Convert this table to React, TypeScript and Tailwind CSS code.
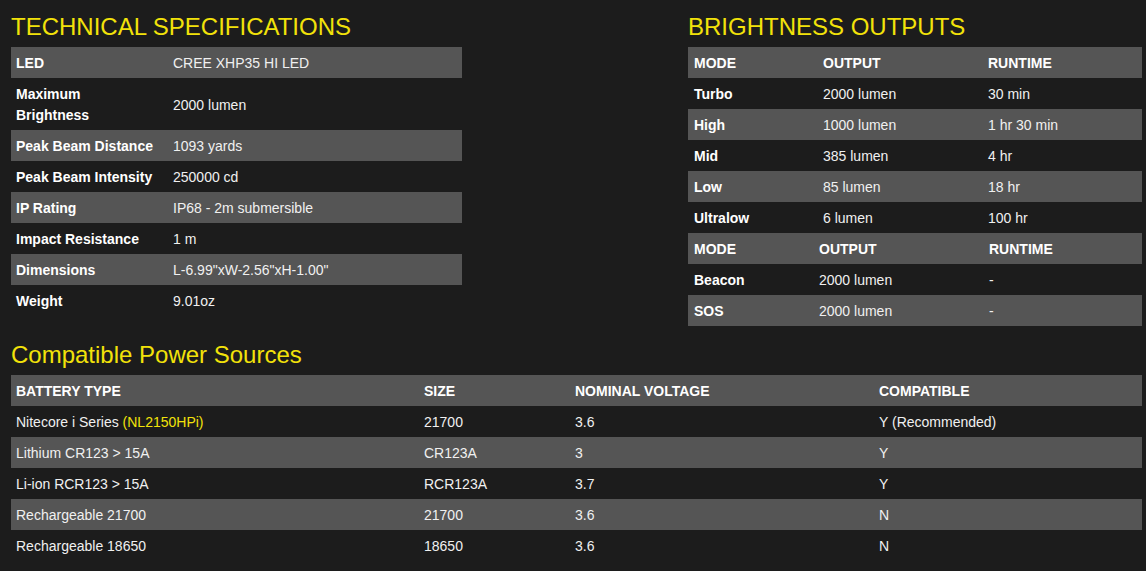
const STRIPE = "bg-[#555555]";
const CELL = "px-[5px] pt-[6px] pb-[4px]";
const MCELL = "px-[6px] pt-[6px] pb-[4px]";

type Cell = string | JSX.Element;

const SPECS: [Cell, Cell][] = [
  ["LED", "CREE XHP35 HI LED"],
  [
    <>
      Maximum
      <br />
      Brightness
    </>,
    "2000 lumen",
  ],
  ["Peak Beam Distance", "1093 yards"],
  ["Peak Beam Intensity", "250000 cd"],
  ["IP Rating", "IP68 - 2m submersible"],
  ["Impact Resistance", "1 m"],
  ["Dimensions", 'L-6.99"xW-2.56"xH-1.00"'],
  ["Weight", "9.01oz"],
];

const MODES: string[][] = [
  ["Turbo", "2000 lumen", "30 min"],
  ["High", "1000 lumen", "1 hr 30 min"],
  ["Mid", "385 lumen", "4 hr"],
  ["Low", "85 lumen", "18 hr"],
  ["Ultralow", "6 lumen", "100 hr"],
];

const SPECIAL: string[][] = [
  ["Beacon", "2000 lumen", "-"],
  ["SOS", "2000 lumen", "-"],
];

const BATTERIES: Cell[][] = [
  [
    <>
      Nitecore i Series <span className="text-[#f2e20a]">(NL2150HPi)</span>
    </>,
    "21700",
    "3.6",
    "Y (Recommended)",
  ],
  ["Lithium CR123 > 15A", "CR123A", "3", "Y"],
  ["Li-ion RCR123 > 15A", "RCR123A", "3.7", "Y"],
  ["Rechargeable 21700", "21700", "3.6", "N"],
  ["Rechargeable 18650", "18650", "3.6", "N"],
];

function Heading({ children }: { children: string }) {
  return (
    <h2 className="mb-[6px] h-[28px] text-[24px] leading-[28px] font-normal text-[#f2e20a]">
      {children}
    </h2>
  );
}

function ModeTable({
  head,
  rows,
  widths,
}: {
  head: string[];
  rows: string[][];
  widths: string[];
}) {
  return (
    <table className="w-[454px] table-fixed border-collapse">
      <colgroup>
        {widths.map((w, i) => (
          <col key={i} className={w} />
        ))}
      </colgroup>
      <tbody>
        <tr className={STRIPE}>
          {head.map((h) => (
            <td key={h} className={`${MCELL} font-bold text-white`}>
              {h}
            </td>
          ))}
        </tr>
        {rows.map((r, i) => (
          <tr key={r[0]} className={i % 2 === 1 ? STRIPE : ""}>
            <td className={`${MCELL} font-bold text-white`}>{r[0]}</td>
            <td className={MCELL}>{r[1]}</td>
            <td className={MCELL}>{r[2]}</td>
          </tr>
        ))}
      </tbody>
    </table>
  );
}

export default function App() {
  return (
    <div className="min-h-[571px] bg-[#1c1c1c] pt-[13px] pr-[4px] pl-[11px] font-['Liberation_Sans',Arial,sans-serif] text-[14px] leading-[21px] text-[#f0f0f0]">
      <div className="flex justify-between">
        <section className="w-[451px]">
          <Heading>TECHNICAL SPECIFICATIONS</Heading>
          <table className="w-[451px] table-fixed border-collapse">
            <colgroup>
              <col className="w-[157px]" />
              <col />
            </colgroup>
            <tbody>
              {SPECS.map(([label, value], i) => (
                <tr key={i} className={i % 2 === 0 ? STRIPE : ""}>
                  <td className={`${CELL} font-bold text-white`}>{label}</td>
                  <td className={CELL}>{value}</td>
                </tr>
              ))}
            </tbody>
          </table>
        </section>

        <section className="w-[454px]">
          <Heading>BRIGHTNESS OUTPUTS</Heading>
          <ModeTable
            head={["MODE", "OUTPUT", "RUNTIME"]}
            rows={MODES}
            widths={["w-[129px]", "w-[165px]", "w-[160px]"]}
          />
          <ModeTable
            head={["MODE", "OUTPUT", "RUNTIME"]}
            rows={SPECIAL}
            widths={["w-[125px]", "w-[170px]", "w-[159px]"]}
          />
        </section>
      </div>

      <section className="mt-[15px]">
        <h2 className="mb-[6px] h-[28px] text-[24px] leading-[28px] font-normal text-[#f2e20a]">
          Compatible Power Sources
        </h2>
        <table className="w-[1131px] table-fixed border-collapse">
          <colgroup>
            <col className="w-[408px]" />
            <col className="w-[151px]" />
            <col className="w-[304px]" />
            <col />
          </colgroup>
          <tbody>
            <tr className={STRIPE}>
              {["BATTERY TYPE", "SIZE", "NOMINAL VOLTAGE", "COMPATIBLE"].map(
                (h) => (
                  <td key={h} className={`${CELL} font-bold text-white`}>
                    {h}
                  </td>
                ),
              )}
            </tr>
            {BATTERIES.map((row, i) => (
              <tr key={i} className={i % 2 === 1 ? STRIPE : ""}>
                {row.map((c, j) => (
                  <td key={j} className={CELL}>
                    {c}
                  </td>
                ))}
              </tr>
            ))}
          </tbody>
        </table>
      </section>
    </div>
  );
}
